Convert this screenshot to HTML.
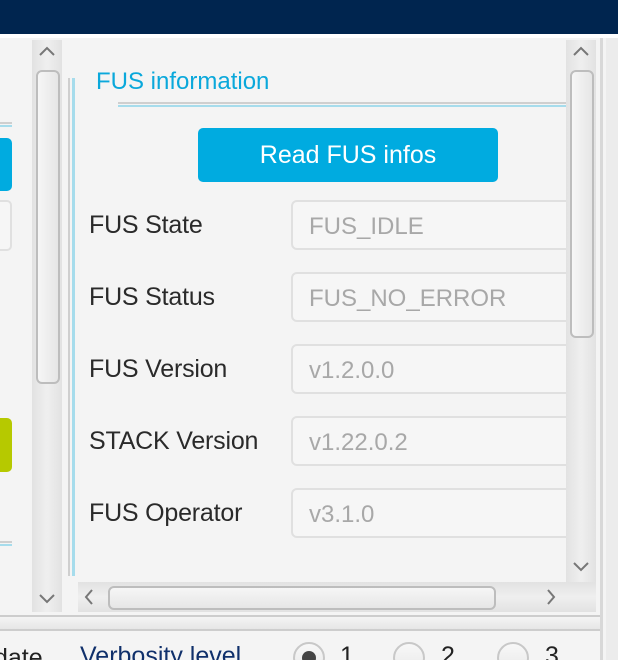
<!DOCTYPE html>
<html style="width:618px;height:660px;overflow:hidden"><head><meta charset="utf-8"><style>
*{margin:0;padding:0;box-sizing:border-box}
body{width:618px;height:660px;overflow:hidden;background:#f4f4f4;position:relative;font-family:"Liberation Sans",Arial,sans-serif}
.a{position:absolute}
.lbl{position:absolute;left:89px;font-size:25px;color:#2a2a2a;letter-spacing:-0.2px}
.fld{position:absolute;left:291px;width:290px;height:50px;border:2px solid #e0e0e0;border-radius:6px;background:#f6f6f6;font-size:24px;color:#a8a8a8;padding:11px 0 0 16px}
.vs{background:linear-gradient(to right,#e2e2e2,#efefef,#e2e2e2)}
.thumb{border:2px solid #bdbdbd;border-radius:6px;background:linear-gradient(to right,#f6f6f6,#e6e6e6)}
.radio{position:absolute;width:32px;height:32px;border-radius:50%;border:2px solid #c8c8c8;background:linear-gradient(#f8f8f8,#e8e8e8)}
</style></head><body>
<div class="a" style="left:0;top:0;width:618px;height:34px;background:#00254f"></div>
<div class="a" style="left:0;top:34px;width:618px;height:4px;background:#fff"></div>

<div class="a" style="left:0;top:122px;width:12px;height:2px;background:#cfcfcf"></div>
<div class="a" style="left:0;top:125px;width:12px;height:2px;background:#a6dcec"></div>
<div class="a" style="left:-8px;top:138px;width:20px;height:53px;background:#00abe0;border-radius:5px"></div>
<div class="a" style="left:-8px;top:200px;width:20px;height:51px;background:#f6f6f6;border:2px solid #e0e0e0;border-radius:5px"></div>
<div class="a" style="left:-8px;top:418px;width:20px;height:54px;background:#b6c900;border-radius:5px"></div>
<div class="a" style="left:0;top:541px;width:12px;height:2px;background:#cfcfcf"></div>
<div class="a" style="left:0;top:544px;width:12px;height:2px;background:#a6dcec"></div>

<div class="a vs" style="left:32px;top:40px;width:30px;height:572px"></div>
<svg class="a" style="left:38px;top:44px" width="18" height="14"><path d="M2 11 L9 4 L16 11" fill="none" stroke="#777" stroke-width="2"/></svg>
<div class="a thumb" style="left:36px;top:70px;width:24px;height:314px"></div>
<svg class="a" style="left:38px;top:592px" width="18" height="14"><path d="M2 3 L9 10 L16 3" fill="none" stroke="#777" stroke-width="2"/></svg>

<div class="a" style="left:68px;top:78px;width:2px;height:498px;background:#cfcfcf"></div>
<div class="a" style="left:72px;top:78px;width:3px;height:498px;background:#a6dcec"></div>
<div class="a" style="left:96px;top:68px;font-size:24px;color:#0aa8db">FUS information</div>
<div class="a" style="left:118px;top:102px;width:448px;height:2px;background:#cfcfcf"></div>
<div class="a" style="left:118px;top:105px;width:448px;height:2px;background:#a6dcec"></div>
<div class="a" style="left:198px;top:128px;width:300px;height:54px;background:#00abe0;border-radius:5px;color:#fff;font-size:25px;text-align:center;line-height:54px">Read FUS infos</div>

<div class="lbl" style="top:211px">FUS State</div><div class="fld" style="top:200px">FUS_IDLE</div>
<div class="lbl" style="top:283px">FUS Status</div><div class="fld" style="top:272px">FUS_NO_ERROR</div>
<div class="lbl" style="top:355px">FUS Version</div><div class="fld" style="top:344px">v1.2.0.0</div>
<div class="lbl" style="top:427px">STACK Version</div><div class="fld" style="top:416px">v1.22.0.2</div>
<div class="lbl" style="top:499px">FUS Operator</div><div class="fld" style="top:488px">v3.1.0</div>

<div class="a vs" style="left:566px;top:40px;width:30px;height:542px"></div>
<svg class="a" style="left:572px;top:44px" width="18" height="14"><path d="M2 11 L9 4 L16 11" fill="none" stroke="#777" stroke-width="2"/></svg>
<div class="a thumb" style="left:570px;top:70px;width:24px;height:268px"></div>
<svg class="a" style="left:572px;top:560px" width="18" height="14"><path d="M2 3 L9 10 L16 3" fill="none" stroke="#777" stroke-width="2"/></svg>

<div class="a" style="left:78px;top:582px;width:518px;height:30px;background:linear-gradient(#e2e2e2,#efefef,#e2e2e2)"></div>
<svg class="a" style="left:82px;top:588px" width="14" height="18"><path d="M10 2 L4 9 L10 16" fill="none" stroke="#777" stroke-width="2"/></svg>
<div class="a thumb" style="left:108px;top:586px;width:388px;height:24px;background:linear-gradient(#f6f6f6,#e6e6e6)"></div>
<svg class="a" style="left:544px;top:588px" width="14" height="18"><path d="M4 2 L10 9 L4 16" fill="none" stroke="#777" stroke-width="2"/></svg>

<div class="a" style="left:600px;top:38px;width:3px;height:622px;background:#d8d8d8"></div>
<div class="a" style="left:606px;top:38px;width:12px;height:622px;background:#ececec"></div>

<div class="a" style="left:0;top:615px;width:600px;height:2px;background:#cdcdcd"></div>
<div class="a" style="left:0;top:617px;width:600px;height:12px;background:linear-gradient(#f4f4f4,#e6e6e6)"></div>
<div class="a" style="left:0;top:629px;width:600px;height:2px;background:#cdcdcd"></div>
<div class="a" style="left:-6px;top:644px;font-size:25px;color:#222">date</div>
<div class="a" style="left:80px;top:642px;font-size:25px;color:#10306b">Verbosity level</div>
<div class="radio" style="left:293px;top:642px"></div>
<div class="a" style="left:302px;top:651px;width:14px;height:14px;border-radius:50%;background:#444"></div>
<div class="a" style="left:340px;top:642px;font-size:25px;color:#222">1</div>
<div class="radio" style="left:393px;top:642px"></div>
<div class="a" style="left:441px;top:642px;font-size:25px;color:#222">2</div>
<div class="radio" style="left:497px;top:642px"></div>
<div class="a" style="left:545px;top:642px;font-size:25px;color:#222">3</div>
</body></html>
